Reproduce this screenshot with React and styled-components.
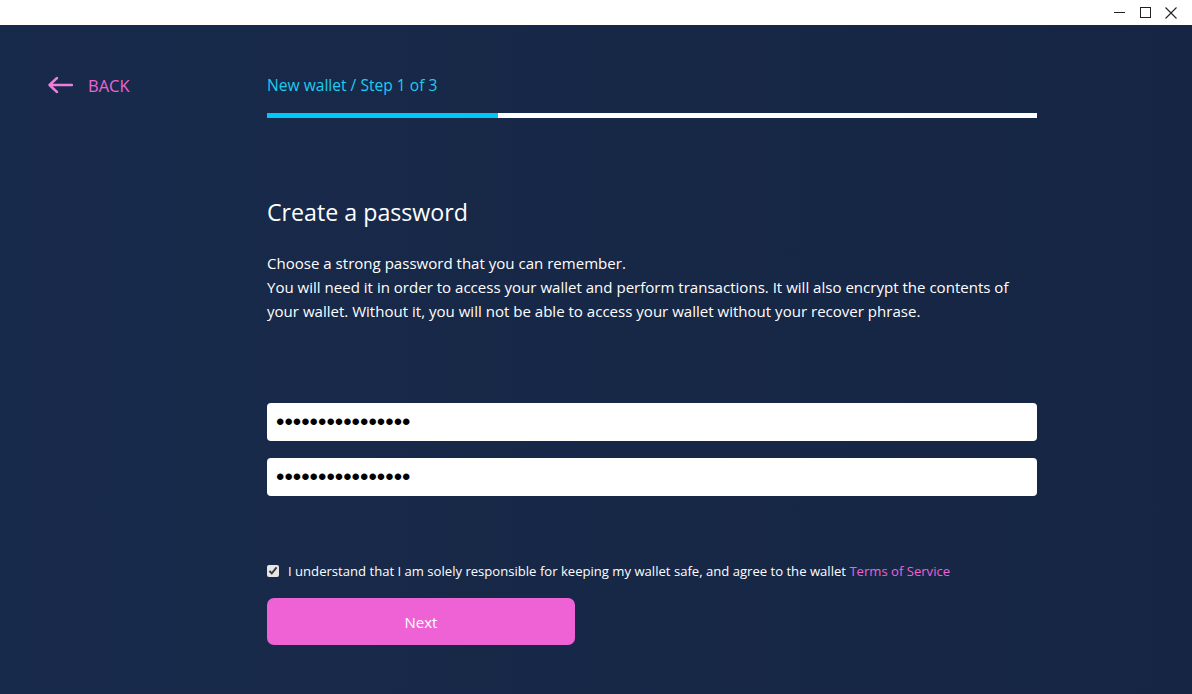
import React, { useState } from "react";
import styled, { createGlobalStyle } from "styled-components";

const GlobalStyle = createGlobalStyle`
  html, body {
    margin: 0;
    padding: 0;
    height: 100%;
    background: #172746;
  }
  body {
    font-family: "Open Sans", "Lato", sans-serif;
  }
`;

const Window = styled.div`
  width: 1192px;
  height: 694px;
  display: flex;
  flex-direction: column;
  background: linear-gradient(90deg, #182a4b 0%, #172746 60%, #152543 100%);
  overflow: hidden;
`;

const TitleBar = styled.div`
  height: 25px;
  background: #ffffff;
  display: flex;
  justify-content: flex-end;
  align-items: center;
  padding-right: 8px;
  flex-shrink: 0;
`;

const WinButton = styled.div`
  width: 26px;
  height: 25px;
  display: flex;
  align-items: center;
  justify-content: center;
`;

const Body = styled.div`
  flex: 1;
  display: flex;
`;

const Side = styled.div`
  width: 267px;
  flex-shrink: 0;
  padding: 50px 0 0 47px;
  box-sizing: border-box;
`;

const BackLink = styled.a`
  display: flex;
  align-items: center;
  gap: 15px;
  color: #ee63d4;
  font-size: 16.5px;
  cursor: pointer;
  text-decoration: none;
  height: 20px;
`;

const Main = styled.div`
  width: 770px;
  display: flex;
  flex-direction: column;
  padding-top: 50px;
`;

const StepLabel = styled.div`
  color: #1fcbf2;
  font-size: 15.6px;
  height: 20px;
  line-height: 20px;
`;

const Progress = styled.div`
  margin-top: 18px;
  height: 5px;
  background: #ffffff;
  display: flex;
`;

const ProgressFill = styled.div`
  background: #00c7f5;
  height: 100%;
`;

const Heading = styled.h1`
  margin: 80px 0 0;
  font-size: 23.2px;
  font-weight: 500;
  color: #ffffff;
  line-height: 28px;
`;

const Paragraph = styled.p`
  margin: 25px 0 0;
  color: #ffffff;
  font-size: 15.05px;
  line-height: 24px;
`;

const Fields = styled.div`
  margin-top: 80px;
  display: flex;
  flex-direction: column;
  gap: 17px;
`;

const Input = styled.input`
  height: 38px;
  border: none;
  border-radius: 4px;
  background: #ffffff;
  padding: 0 9px;
  font-size: 24px;
  color: #000;
  outline: none;
  font-family: "Liberation Sans", sans-serif;
`;

const Agreement = styled.label`
  margin-top: 67px;
  display: flex;
  align-items: center;
  gap: 9px;
  color: #ffffff;
  font-size: 13.1px;
  line-height: 16px;
`;

const Check = styled.input`
  margin: 0;
  width: 12px;
  height: 12px;
  accent-color: #e6e6e6;
`;

const TermsLink = styled.span`
  color: #ee63d4;
`;

const NextButton = styled.button`
  margin-top: 19px;
  width: 308px;
  height: 47px;
  border: none;
  border-radius: 7px;
  background: #ef62d6;
  color: #ffffff;
  font-family: inherit;
  font-size: 15px;
  cursor: pointer;
`;

export default function App() {
  const [agreed, setAgreed] = useState(true);
  const step = 1;
  const total = 3;

  return (
    <Window>
      <GlobalStyle />
      <TitleBar>
        <WinButton>
          <svg width="11" height="11" viewBox="0 0 11 11">
            <line x1="0" y1="5.5" x2="11" y2="5.5" stroke="#222" strokeWidth="1" />
          </svg>
        </WinButton>
        <WinButton>
          <svg width="11" height="11" viewBox="0 0 11 11">
            <rect x="0.5" y="0.5" width="10" height="10" fill="none" stroke="#222" strokeWidth="1" />
          </svg>
        </WinButton>
        <WinButton>
          <svg width="12" height="12" viewBox="0 0 12 12">
            <path d="M0.5 0.5 L11.5 11.5 M11.5 0.5 L0.5 11.5" stroke="#222" strokeWidth="1.1" />
          </svg>
        </WinButton>
      </TitleBar>
      <Body>
        <Side>
          <BackLink>
            <svg width="26" height="18" viewBox="0 0 26 18">
              <path
                d="M25 9 H3 M10 2 L2.5 9 L10 16"
                fill="none"
                stroke="#ee7edc"
                strokeWidth="2.4"
                strokeLinecap="round"
                strokeLinejoin="round"
              />
            </svg>
            BACK
          </BackLink>
        </Side>
        <Main>
          <StepLabel>
            New wallet / Step {step} of {total}
          </StepLabel>
          <Progress>
            <ProgressFill style={{ width: `${(231 / 770) * 100}%` }} />
          </Progress>
          <Heading>Create a password</Heading>
          <Paragraph>
            Choose a strong password that you can remember.
            <br />
            You will need it in order to access your wallet and perform transactions. It will also encrypt the contents of
            your wallet. Without it, you will not be able to access your wallet without your recover phrase.
          </Paragraph>
          <Fields>
            <Input type="password" defaultValue="abcdefghijklmnop" />
            <Input type="password" defaultValue="abcdefghijklmnop" />
          </Fields>
          <Agreement>
            <Check type="checkbox" checked={agreed} onChange={(e) => setAgreed(e.target.checked)} />
            <span>
              I understand that I am solely responsible for keeping my wallet safe, and agree to the wallet{" "}
              <TermsLink>Terms of Service</TermsLink>
            </span>
          </Agreement>
          <NextButton>Next</NextButton>
        </Main>
      </Body>
    </Window>
  );
}
